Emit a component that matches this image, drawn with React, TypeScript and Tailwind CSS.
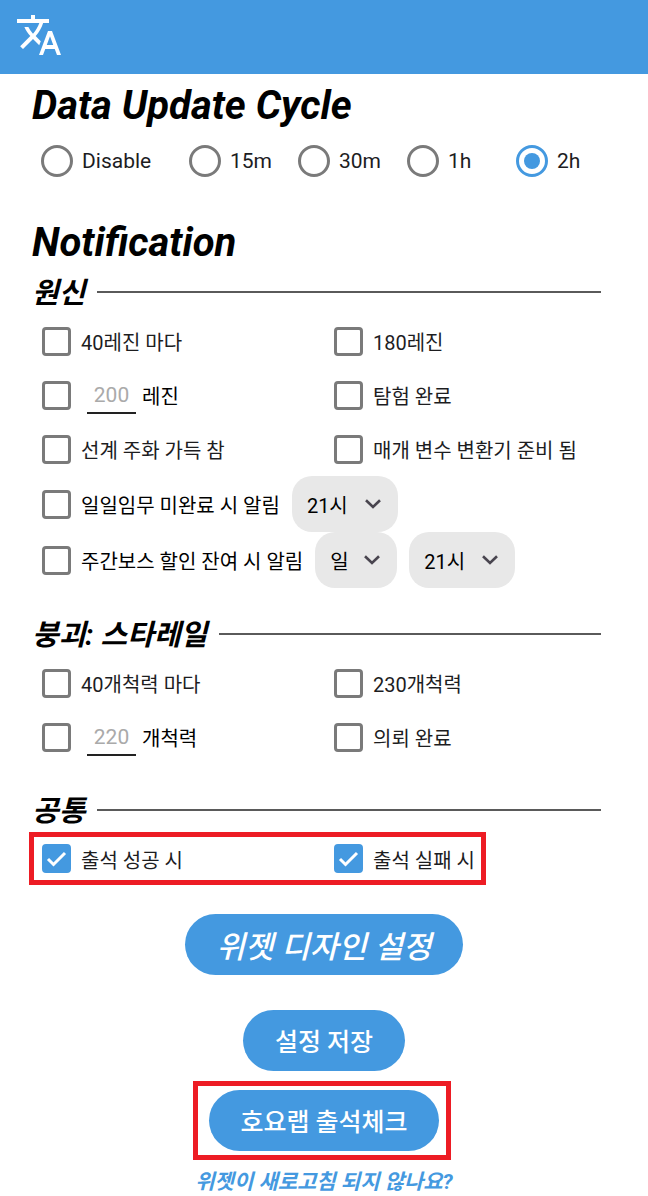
import { ReactNode, useState } from 'react'

function Check({
  id,
  label,
  defaultChecked = false,
  dark = false,
  children,
}: {
  id: string
  label?: string
  defaultChecked?: boolean
  dark?: boolean
  children?: ReactNode
}) {
  return (
    <div className="flex items-center gap-[10px] text-[20px] leading-[28px]">
      <span className="grid shrink-0">
        <input
          id={id}
          type="checkbox"
          defaultChecked={defaultChecked}
          aria-label={label ? undefined : id}
          className="peer [grid-area:1/1] w-[29px] h-[29px] appearance-none rounded-[4px] border-3 border-[#7a7a7a] checked:border-[#4499e0] checked:bg-[#4499e0]"
        />
        <svg
          viewBox="0 0 29 29"
          className="[grid-area:1/1] w-[29px] h-[29px] pointer-events-none hidden peer-checked:block"
          fill="none"
          stroke="white"
          strokeWidth="3"
        >
          <path d="M6 15 11.5 20.5 23 9" />
        </svg>
      </span>
      {label && (
        <label
          htmlFor={id}
          className={`pt-[4px] whitespace-nowrap ${dark ? 'text-black' : 'text-[#1d1d1f]'}`}
        >
          {label}
        </label>
      )}
      {children}
    </div>
  )
}

function AmountCheck({ id, amount, unit }: { id: string; amount: string; unit: string }) {
  return (
    <Check id={id}>
      <div className="flex items-center gap-[6px] pl-[6px]">
        <input
          id={`${id}-amount`}
          type="text"
          placeholder={amount}
          className="w-[49px] h-[38px] border-b-2 border-[#222] pt-[2px] text-center text-[21px] placeholder:text-[#aaa] outline-none"
        />
        <label htmlFor={`${id}-amount`} className="pt-[4px] text-black">
          {unit}
        </label>
      </div>
    </Check>
  )
}

function Dropdown({ label, options, wide }: { label: string; options: string[]; wide?: boolean }) {
  return (
    <span className="grid items-center">
      <select
        aria-label={label}
        className={`[grid-area:1/1] appearance-none h-[56px] rounded-[20px] bg-[#e8e8e8] pl-[15px] pt-[3px] text-[20px] text-black ${
          wide ? 'w-[106px]' : 'w-[82px]'
        }`}
      >
        {options.map((option) => (
          <option key={option}>{option}</option>
        ))}
      </select>
      <svg
        viewBox="0 0 16 10"
        className="[grid-area:1/1] justify-self-end mr-[17px] w-[16px] h-[10px] pointer-events-none"
        fill="none"
        stroke="#49454f"
        strokeWidth="2.6"
      >
        <path d="M1 1.2 8 8 15 1.2" />
      </svg>
    </span>
  )
}

function SectionTitle({ children }: { children: ReactNode }) {
  return (
    <div className="flex items-center gap-[12px] h-[44px] pl-[32px] pr-[47px]">
      <h2 className="pt-[2px] text-[29px] leading-[40px] font-bold italic">{children}</h2>
      <div className="grow h-[2px] bg-[#5a5a5a]" />
    </div>
  )
}

export default function App() {
  const [cycle, setCycle] = useState('2h')

  const cycles = [
    { value: 'Disable', width: 'w-[148px]' },
    { value: '15m', width: 'w-[109px]' },
    { value: '30m', width: 'w-[109px]' },
    { value: '1h', width: 'w-[109px]' },
    { value: '2h', width: 'w-[70px]' },
  ]

  return (
    <div className="min-h-screen bg-white text-black font-[Roboto,'Noto_Sans_CJK_KR',sans-serif]">
      <header className="h-[74px] bg-[#4499e0] pl-[15px] pt-[11px]">
        <button type="button" aria-label="Language" className="block">
          <svg viewBox="0 0 24 24" className="w-[48px] h-[48px]" fill="white">
            <path d="M12.87 15.07l-2.54-2.51.03-.03c1.74-1.94 2.98-4.17 3.71-6.53H17V4h-7V2H8v2H1v1.99h11.17C11.5 7.92 10.44 9.75 9 11.35 8.07 10.32 7.3 9.19 6.69 8h-2c.73 1.63 1.73 3.17 2.98 4.56l-5.09 5.02L4 19l5-5 3.11 3.11.76-2.04zM18.5 10h-2L12 22h2l1.12-3h4.75L21 22h2l-4.5-12zm-2.62 7l1.62-4.33L19.12 17h-3.24z" />
          </svg>
        </button>
      </header>

      <main>
        <h1 className="pl-[32px] pt-[7px] text-[40px] leading-[50px] font-bold italic">
          Data Update Cycle
        </h1>
        <div role="radiogroup" aria-label="Data Update Cycle" className="flex pl-[41px] pt-[13px]">
          {cycles.map(({ value, width }) => (
            <label
              key={value}
              className={`flex items-center gap-[9px] text-[21px] leading-[32px] text-[#1d1d1f] ${width}`}
            >
              <span className="grid place-items-center shrink-0">
                <input
                  type="radio"
                  name="cycle"
                  checked={cycle === value}
                  onChange={() => setCycle(value)}
                  className="peer [grid-area:1/1] w-[32px] h-[32px] appearance-none rounded-full border-3 border-[#7a7a7a] checked:border-[#4499e0]"
                />
                <span className="[grid-area:1/1] w-[16px] h-[16px] rounded-full pointer-events-none peer-checked:bg-[#4499e0]" />
              </span>
              <span className="pt-px">{value}</span>
            </label>
          ))}
        </div>

        <h1 className="pl-[32px] pt-[41px] text-[40px] leading-[50px] font-bold italic">
          Notification
        </h1>
        <div className="pt-[2px]">
          <SectionTitle>원신</SectionTitle>
        </div>
        <div className="grid grid-cols-2 auto-rows-[54px] pl-[42px] pr-[22px]">
          <Check id="resin-40" label="40레진 마다" />
          <Check id="resin-180" label="180레진" />
          <AmountCheck id="resin-custom" amount="200" unit="레진" />
          <Check id="expedition" label="탐험 완료" />
          <Check id="realm-coin" label="선계 주화 가득 참" />
          <Check id="transformer" label="매개 변수 변환기 준비 됨" />
        </div>
        <div className="pl-[42px]">
          <div className="flex items-center gap-[12px]">
            <Check id="daily" label="일일임무 미완료 시 알림" dark />
            <Dropdown label="일일임무 알림 시간" options={['21시', '22시', '23시']} wide />
          </div>
          <div className="flex items-center gap-[12px]">
            <Check id="weekly" label="주간보스 할인 잔여 시 알림" dark />
            <Dropdown label="주간보스 알림 요일" options={['일', '월', '화', '수', '목', '금', '토']} />
            <Dropdown label="주간보스 알림 시간" options={['21시', '22시', '23시']} wide />
          </div>
        </div>

        <div className="pt-[24px]">
          <SectionTitle>붕괴: 스타레일</SectionTitle>
        </div>
        <div className="grid grid-cols-2 auto-rows-[54px] pl-[42px] pr-[22px]">
          <Check id="power-40" label="40개척력 마다" />
          <Check id="power-230" label="230개척력" />
          <AmountCheck id="power-custom" amount="220" unit="개척력" />
          <Check id="assignment" label="의뢰 완료" />
        </div>

        <div className="pt-[24px]">
          <SectionTitle>공통</SectionTitle>
        </div>
        <div className="relative grid grid-cols-2 h-[53px] pl-[42px] pr-[22px]">
          <Check id="checkin-success" label="출석 성공 시" defaultChecked />
          <Check id="checkin-fail" label="출석 실패 시" defaultChecked />
          <div className="absolute inset-y-0 left-[29px] right-[162px] border-5 border-[#ed1c24] pointer-events-none" />
        </div>

        <div className="flex flex-col items-center pt-[29px] text-white font-medium">
          <button
            type="button"
            className="h-[61px] rounded-full bg-[#4499e0] px-[32px] pt-[8px] text-[31px] italic"
          >
            위젯 디자인 설정
          </button>
          <button
            type="button"
            className="mt-[35px] h-[61px] rounded-full bg-[#4499e0] px-[32px] pt-[4px] text-[25px]"
          >
            설정 저장
          </button>
          <div className="mt-[10px] mr-[4px] border-5 border-[#ed1c24] pl-[11px] pr-[7px] py-[4px]">
            <button
              type="button"
              className="block h-[61px] rounded-full bg-[#4499e0] px-[31px] pt-[4px] text-[25px]"
            >
              호요랩 출석체크
            </button>
          </div>
          <a href="#help" className="mt-[9px] text-[21px] leading-[26px] font-bold italic text-[#4499e0]">
            위젯이 새로고침 되지 않나요?
          </a>
        </div>
      </main>
    </div>
  )
}
